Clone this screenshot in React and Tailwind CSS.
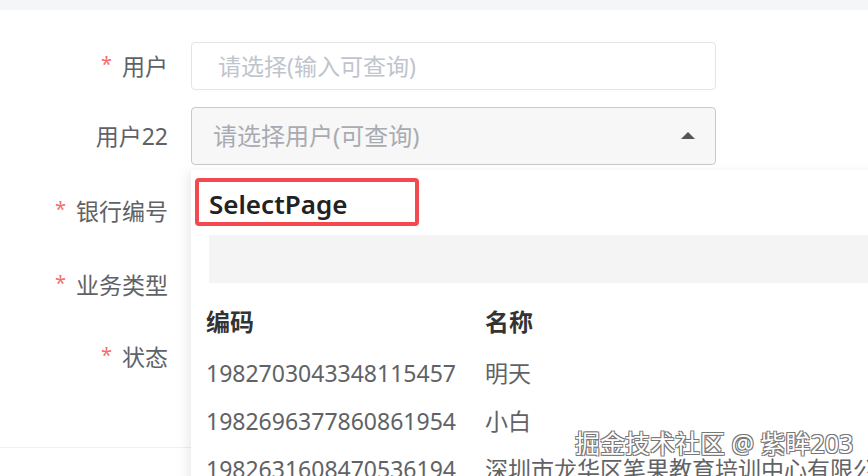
import React from 'react'

const cjk = "font-['Noto_Sans','Noto_Sans_CJK_SC',sans-serif]"

const rows = [
  { code: '1982703043348115457', name: '明天' },
  { code: '1982696377860861954', name: '小白' },
  { code: '1982631608470536194', name: '深圳市龙华区笔果教育培训中心有限公司' },
]

function Label({ required, children }) {
  return (
    <div className="w-[170px] shrink-0 text-right text-[23px] text-[#5f6266] pr-[2px]">
      {required && <span className="text-[#f56c6c] text-[20px] mr-[10px] align-top">*</span>}
      {children}
    </div>
  )
}

export default function App() {
  return (
    <div className={`relative w-[868px] h-[476px] overflow-hidden bg-white ${cjk}`}>
      <div className="h-[10px] bg-[#f5f6f8]" />

      {/* Form */}
      <div className="h-[438px] border-b border-[#efefef]">
        <div className="flex items-center gap-[21px] pt-[32px]">
          <Label required>用户</Label>
          <div className="w-[525px] h-[48px] rounded-[4px] border border-[#e4e4e4] flex items-center pl-[26px] text-[23px] text-[#c0c4cc]">
            请选择(输入可查询)
          </div>
        </div>

        <div className="flex items-center gap-[21px] mt-[17px]">
          <Label>用户22</Label>
          <div className="w-[525px] h-[58px] rounded-[4px] border border-[#c9c9c9] bg-[#f7f7f7] flex items-center justify-between pl-[21px] pr-[20px] text-[24px] text-[#a8abb2]">
            <span>请选择用户(可查询)</span>
            <svg width="14" height="8" viewBox="0 0 14 8">
              <path d="M7 0 L14 7 L0 7 Z" fill="#555" />
            </svg>
          </div>
        </div>

        <div className="flex items-center h-[48px] mt-[22px]">
          <Label required>银行编号</Label>
        </div>
        <div className="flex items-center h-[48px] mt-[26px]">
          <Label required>业务类型</Label>
        </div>
        <div className="flex items-center h-[48px] mt-[24px]">
          <Label required>状态</Label>
        </div>
      </div>

      {/* Dropdown panel */}
      <div className="absolute left-[191px] top-[170px] w-[720px] h-[340px] bg-white shadow-[-4px_2px_10px_rgba(0,0,0,0.08)] pt-[8px]">
        <div className="ml-[4px] w-[224px] h-[48px] border-4 border-[#f24a4f] rounded-[4px] flex items-end pl-[10px]">
          <span className="text-[26px] font-semibold text-[#222] leading-[36px]">SelectPage</span>
        </div>
        <div className="ml-[18px] mt-[9px] h-[48px] bg-[#f4f4f4]" />
        <div className="ml-[15px] mt-[15px]">
          <div className="flex items-center h-[48px] text-[24px] font-bold text-[#333]">
            <div className="w-[279px]">编码</div>
            <div>名称</div>
          </div>
          {rows.map((r, i) => (
            <div key={r.code} className={`flex items-center h-[48px] text-[23px] text-[#606266] whitespace-nowrap ${i === 0 ? 'mt-[3px]' : ''}`}>
              <div className="w-[279px]">{r.code}</div>
              <div>{r.name}</div>
            </div>
          ))}
        </div>
      </div>

      {/* Watermark */}
      <div className="absolute left-[575px] top-[428px] text-[25px] leading-[30px] text-white whitespace-nowrap [text-shadow:1px_1px_0_#777,-1px_-1px_0_#777,1px_-1px_0_#777,-1px_1px_0_#777]">
        掘金技术社区 @ 紫眸203
      </div>
    </div>
  )
}
